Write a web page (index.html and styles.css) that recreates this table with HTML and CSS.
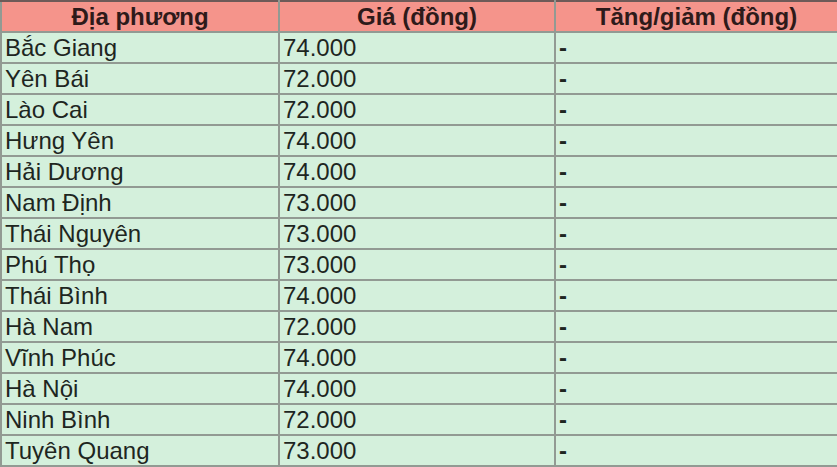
FILE: index.html
```html
<!DOCTYPE html>
<html lang="vi">
<head>
<meta charset="utf-8">
<link rel="stylesheet" href="styles.css">
</head>
<body>
<table class="price-table">
  <colgroup>
    <col class="c1"><col class="c2"><col class="c3">
  </colgroup>
  <thead>
    <tr><th>Địa phương</th><th>Giá (đồng)</th><th>Tăng/giảm (đồng)</th></tr>
  </thead>
  <tbody>
    <tr><td>Bắc Giang</td><td>74.000</td><td>-</td></tr>
    <tr><td>Yên Bái</td><td>72.000</td><td>-</td></tr>
    <tr><td>Lào Cai</td><td>72.000</td><td>-</td></tr>
    <tr><td>Hưng Yên</td><td>74.000</td><td>-</td></tr>
    <tr><td>Hải Dương</td><td>74.000</td><td>-</td></tr>
    <tr><td>Nam Định</td><td>73.000</td><td>-</td></tr>
    <tr><td>Thái Nguyên</td><td>73.000</td><td>-</td></tr>
    <tr><td>Phú Thọ</td><td>73.000</td><td>-</td></tr>
    <tr><td>Thái Bình</td><td>74.000</td><td>-</td></tr>
    <tr><td>Hà Nam</td><td>72.000</td><td>-</td></tr>
    <tr><td>Vĩnh Phúc</td><td>74.000</td><td>-</td></tr>
    <tr><td>Hà Nội</td><td>74.000</td><td>-</td></tr>
    <tr><td>Ninh Bình</td><td>72.000</td><td>-</td></tr>
    <tr><td>Tuyên Quang</td><td>73.000</td><td>-</td></tr>
  </tbody>
</table>
</body>
</html>
```
FILE: styles.css
```css
html, body {
  margin: 0;
  padding: 0;
  background: #ffffff;
}
.price-table {
  width: 837px;
  border-collapse: collapse;
  table-layout: fixed;
  font-family: "Liberation Sans", Arial, sans-serif;
  font-size: 24px;
  color: #1e261f;
}
.price-table .c1 { width: 278px; }
.price-table .c2 { width: 276px; }
.price-table .c3 { width: 283px; }
.price-table th,
.price-table td {
  border: 2px solid #929a93;
  height: 29px;
  padding: 0 3px;
  line-height: 29px;
  vertical-align: middle;
  white-space: nowrap;
  overflow: hidden;
}
.price-table th {
  background: #f5948b;
  color: #2e1a1a;
  font-weight: bold;
  text-align: center;
}
.price-table td {
  background: #d4f0dc;
  text-align: left;
}
.price-table td:last-child {
  font-weight: bold;
}
.price-table thead th {
  border-top-color: #6e5a58;
}
```
